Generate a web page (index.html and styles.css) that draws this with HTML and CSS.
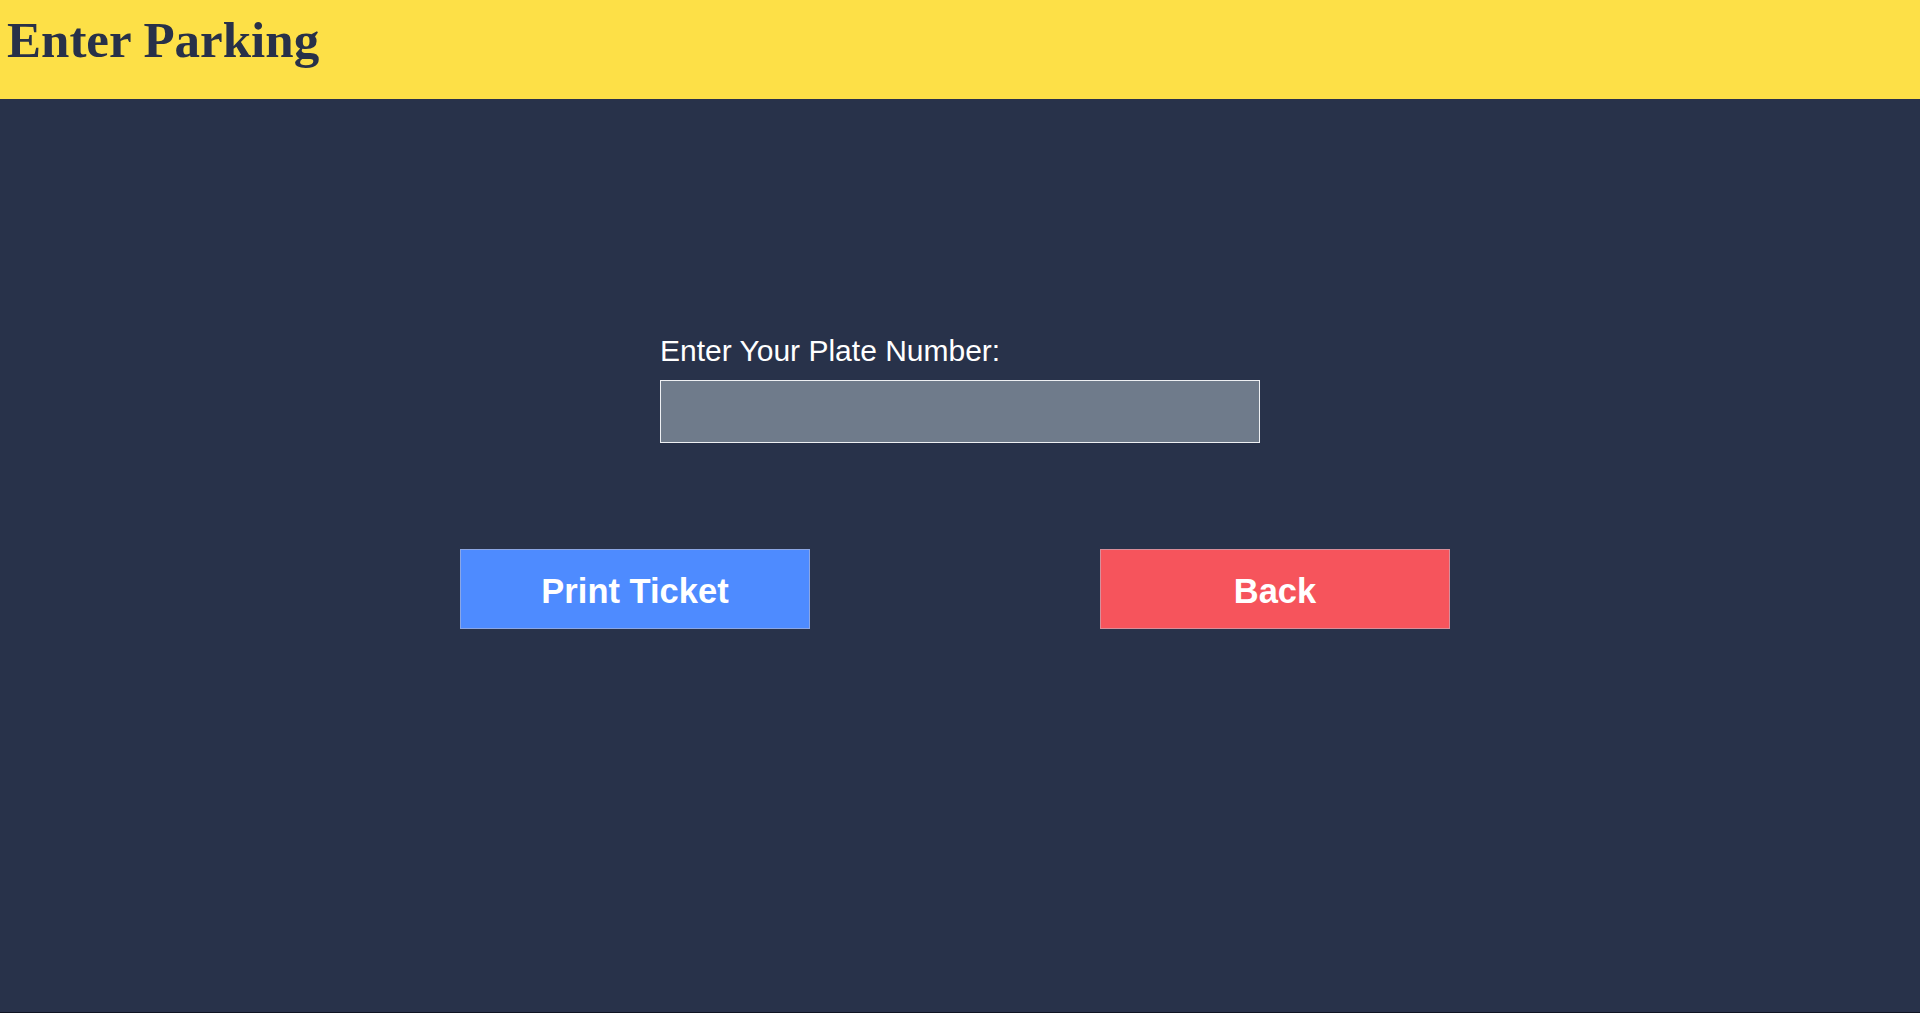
FILE: index.html
```html
<!DOCTYPE html>
<html lang="en">
<head>
<meta charset="utf-8">
<title>Enter Parking</title>
<link rel="stylesheet" href="styles.css">
</head>
<body>
<div class="page">
  <header class="topbar">
    <h1 class="title">Enter Parking</h1>
  </header>
  <main class="content">
    <div class="form">
      <label class="label" for="plate">Enter Your Plate Number:</label>
      <input class="plate-input" id="plate" type="text">
    </div>
    <div class="actions">
      <button class="btn btn-print" type="button">Print Ticket</button>
      <button class="btn btn-back" type="button">Back</button>
    </div>
  </main>
</div>
</body>
</html>
```

FILE: styles.css
```css
html, body {
  margin: 0;
  padding: 0;
  height: 100%;
}

body {
  background: #0f1422;
  font-family: "Liberation Sans", Arial, sans-serif;
}

.page {
  display: flex;
  flex-direction: column;
  height: 1012px;
  background: #28324a;
}

.topbar {
  height: 99px;
  background: #fde047;
  display: flex;
  align-items: flex-start;
}

.title {
  margin: 0;
  padding: 11px 0 0 7px;
  font-family: "Liberation Serif", "Times New Roman", serif;
  font-weight: bold;
  font-size: 51px;
  line-height: 58px;
  color: #283149;
}

.content {
  flex: 1;
  display: flex;
  flex-direction: column;
  align-items: center;
}

.form {
  width: 600px;
  margin-top: 235px;
  display: flex;
  flex-direction: column;
}

.label {
  color: #ffffff;
  font-size: 30px;
  line-height: 33px;
}

.plate-input {
  box-sizing: border-box;
  margin-top: 13px;
  width: 600px;
  height: 63px;
  background: #6f7b8b;
  border: 1px solid #eef0f3;
  outline: none;
  padding: 0 10px;
  font-size: 24px;
  color: #ffffff;
  font-family: inherit;
}

.actions {
  box-sizing: border-box;
  width: 1000px;
  padding-right: 10px;
  margin-top: 106px;
  display: flex;
  justify-content: space-between;
}

.btn {
  box-sizing: border-box;
  width: 350px;
  height: 80px;
  border: 1px solid rgba(190, 190, 205, 0.55);
  color: #ffffff;
  font-family: "Liberation Sans", Arial, sans-serif;
  font-weight: bold;
  font-size: 34.5px;
  cursor: pointer;
  padding: 4px 0 0 0;
}

.btn-print {
  background: #4e8bff;
}

.btn-back {
  background: #f6545c;
}
```
